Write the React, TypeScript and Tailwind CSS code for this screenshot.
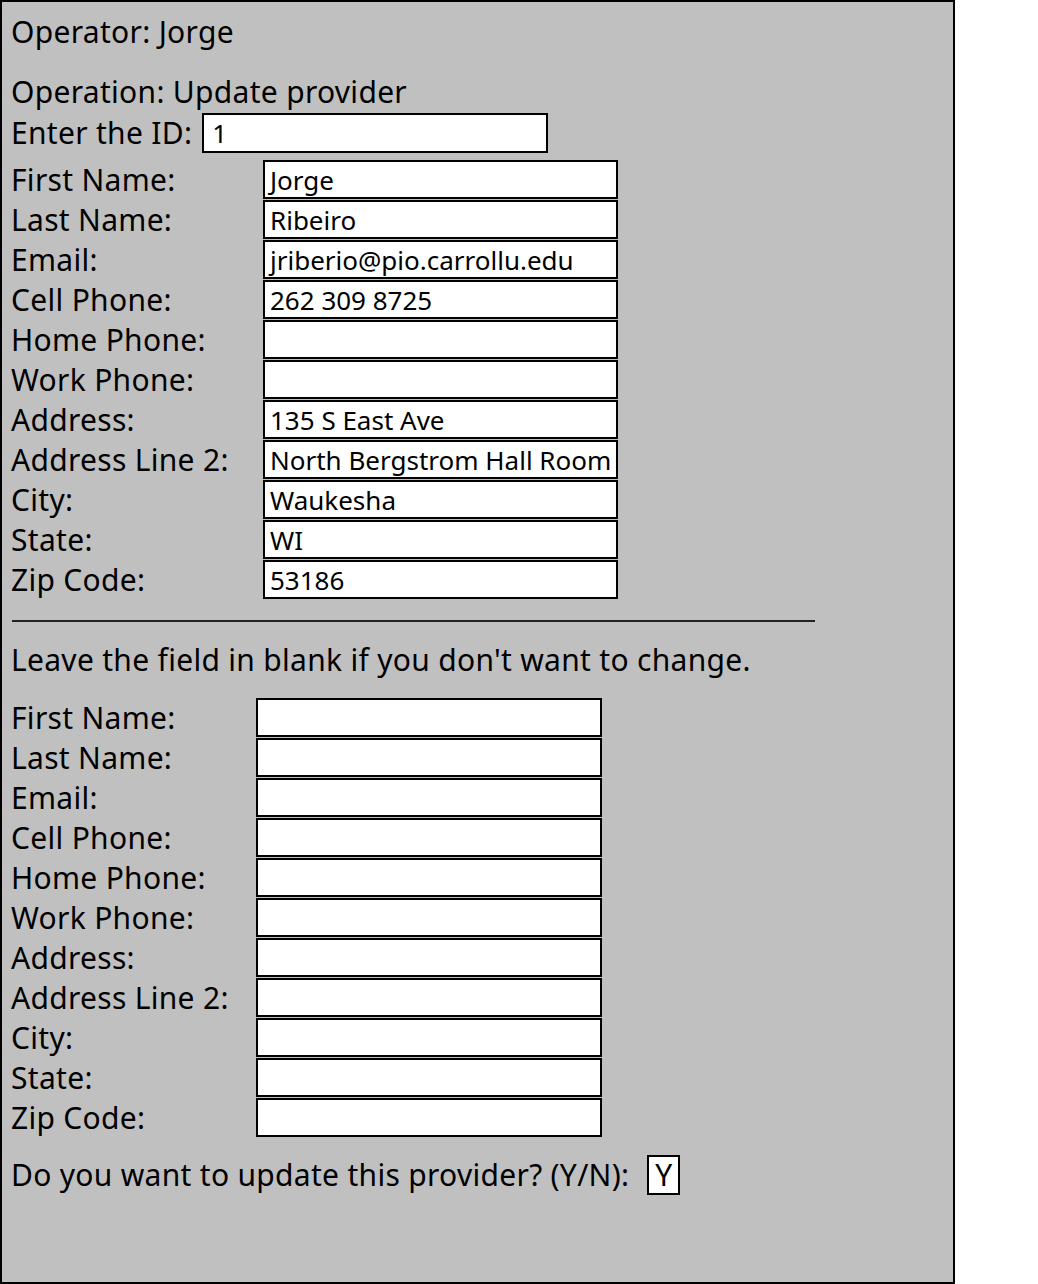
import React from "react";

const rows1: [string, string][] = [
  ["First Name:", "Jorge"],
  ["Last Name:", "Ribeiro"],
  ["Email:", "jriberio@pio.carrollu.edu"],
  ["Cell Phone:", "262 309 8725"],
  ["Home Phone:", ""],
  ["Work Phone:", ""],
  ["Address:", "135 S East Ave"],
  ["Address Line 2:", "North Bergstrom Hall Room"],
  ["City:", "Waukesha"],
  ["State:", "WI"],
  ["Zip Code:", "53186"],
];

const labels2 = [
  "First Name:",
  "Last Name:",
  "Email:",
  "Cell Phone:",
  "Home Phone:",
  "Work Phone:",
  "Address:",
  "Address Line 2:",
  "City:",
  "State:",
  "Zip Code:",
];

export default function App() {
  return (
    <div className="min-h-screen bg-white">
      <div
        className="w-[955px] h-[1284px] bg-[#c0c0c0] border-2 border-black flex flex-col pl-[9px] text-black text-[30px] leading-none tracking-[0.3px]"
        style={{ fontFamily: '"Noto Sans", sans-serif' }}
      >
        <div className="h-[60px] flex items-center">Operator: Jorge</div>
        <div className="mt-[16px] h-[28px] flex items-center">Operation: Update provider</div>
        <div className="mt-[7px] h-[40px] flex items-center">
          <span>Enter the ID:</span>
          <div className="ml-[10px] w-[346px] h-[40px] bg-white border-2 border-black flex items-center pl-[8px] text-[26px] tracking-normal">1</div>
        </div>
        <div className="mt-[7px] flex flex-col">
          {rows1.map(([l, v]) => (
            <div key={l} className="h-[40px] flex items-start">
              <div className="w-[252px] h-[39px] flex items-center">{l}</div>
              <div className="w-[355px] h-[39px] bg-white border-2 border-black flex items-center pl-[5px] text-[26px] tracking-normal whitespace-nowrap overflow-hidden">
                {v}
              </div>
            </div>
          ))}
        </div>
        <div className="mt-[20px] ml-[1px] w-[803px] h-[2px] bg-[#222]" />
        <div className="h-[76px] flex items-center">Leave the field in blank if you don't want to change.</div>
        <div className="flex flex-col">
          {labels2.map((l) => (
            <div key={l} className="h-[40px] flex items-start">
              <div className="w-[245px] h-[39px] flex items-center">{l}</div>
              <div className="w-[346px] h-[39px] bg-white border-2 border-black" />
            </div>
          ))}
        </div>
        <div className="mt-[17px] h-[40px] flex items-center">
          <span>Do you want to update this provider? (Y/N):</span>
          <div className="ml-[18px] w-[33px] h-[40px] bg-white border-2 border-black flex items-center justify-center">Y</div>
        </div>
      </div>
    </div>
  );
}
